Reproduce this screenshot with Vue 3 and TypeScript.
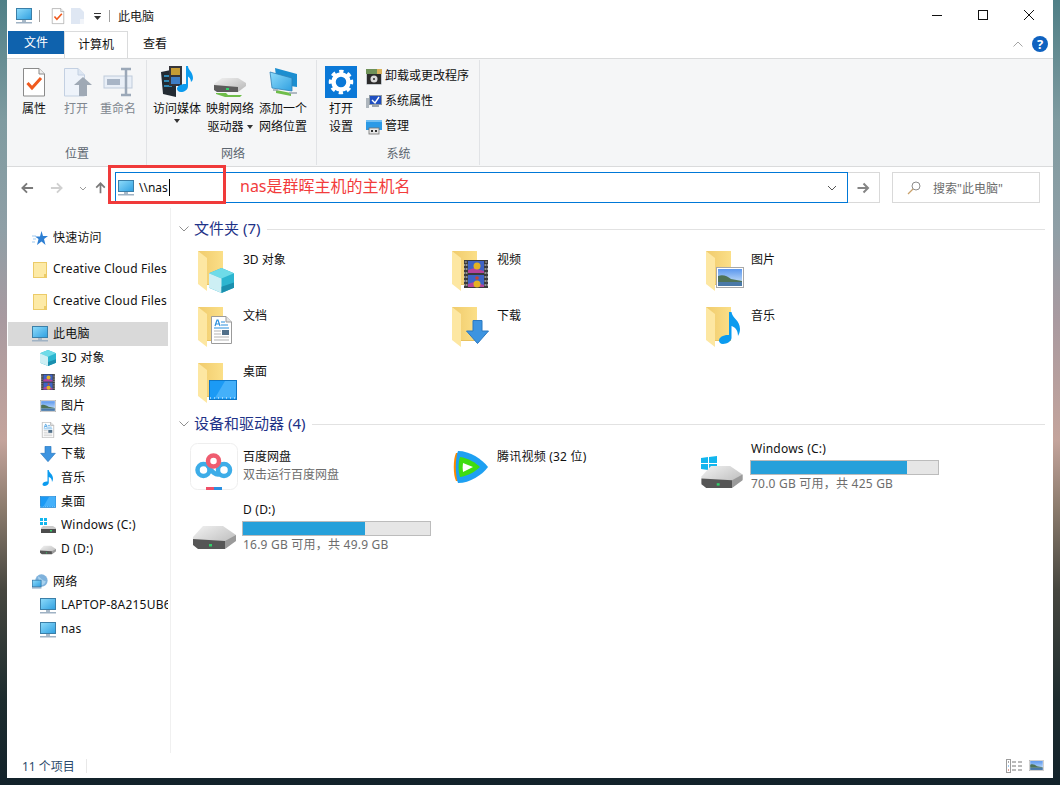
<script setup lang="ts">
interface NavRow {
  label: string;
  icon: string;
  level: 0 | 1;
  selected?: boolean;
  gapAfter?: boolean;
}

interface Overlay {
  id: string;
  x: number;
  y: number;
  w: number;
  h: number;
}

interface FolderTile {
  label: string;
  overlay: Overlay;
}

const navRows: NavRow[] = [
  { label: '快速访问', icon: 'star', level: 0, gapAfter: true },
  { label: 'Creative Cloud Files', icon: 'nav-folder', level: 0, gapAfter: true },
  { label: 'Creative Cloud Files', icon: 'nav-folder', level: 0, gapAfter: true },
  { label: '此电脑', icon: 'pc', level: 0, selected: true },
  { label: '3D 对象', icon: 'cube', level: 1 },
  { label: '视频', icon: 'film', level: 1 },
  { label: '图片', icon: 'picture', level: 1 },
  { label: '文档', icon: 'doc', level: 1 },
  { label: '下载', icon: 'arrow', level: 1 },
  { label: '音乐', icon: 'note', level: 1 },
  { label: '桌面', icon: 'screen', level: 1 },
  { label: 'Windows (C:)', icon: 'win-drive', level: 1 },
  { label: 'D (D:)', icon: 'drive', level: 1, gapAfter: true },
  { label: '网络', icon: 'network', level: 0 },
  { label: 'LAPTOP-8A215UB6', icon: 'pc', level: 1 },
  { label: 'nas', icon: 'pc', level: 1 },
];

const folders: FolderTile[] = [
  { label: '3D 对象', overlay: { id: 'cube', x: 20, y: 22, w: 25, h: 25 } },
  { label: '视频', overlay: { id: 'film', x: 21, y: 14, w: 24, h: 28 } },
  { label: '图片', overlay: { id: 'picture', x: 19, y: 21, w: 28, h: 21 } },
  { label: '文档', overlay: { id: 'doc', x: 22, y: 14, w: 21, h: 28 } },
  { label: '下载', overlay: { id: 'arrow', x: 23, y: 18, w: 23, h: 24 } },
  { label: '音乐', overlay: { id: 'note', x: 22, y: 10, w: 22, h: 32 } },
  { label: '桌面', overlay: { id: 'screen', x: 20, y: 22, w: 28, h: 20 } },
];
</script>

<template>
  <div class="desktop">
    <svg class="sprites" aria-hidden="true">
      <defs>
        <linearGradient id="pc-grad" x1="0" y1="0" x2="1" y2="1">
          <stop offset="0" stop-color="#8fdcfb" />
          <stop offset="1" stop-color="#2f9fe0" />
        </linearGradient>
        <linearGradient id="folder-back" x1="0" y1="0" x2="1" y2="0">
          <stop offset="0" stop-color="#f0cb6c" />
          <stop offset="1" stop-color="#fbdf88" />
        </linearGradient>
        <linearGradient id="drive-top" x1="0" y1="0" x2="1" y2="1">
          <stop offset="0" stop-color="#f2f2f2" />
          <stop offset="1" stop-color="#b5b5b5" />
        </linearGradient>
        <linearGradient id="sky" x1="0" y1="0" x2="0" y2="1">
          <stop offset="0" stop-color="#5b97ee" />
          <stop offset="1" stop-color="#d8ecfa" />
        </linearGradient>
      </defs>
      <symbol id="pc" viewBox="0 0 16 16">
        <rect x="0.5" y="0.5" width="15" height="11" fill="url(#pc-grad)" stroke="#3b7fa8" />
        <rect x="6" y="12" width="4" height="2" fill="#a9b9c8" />
        <rect x="0" y="14" width="16" height="1.5" fill="#9fb2c4" />
      </symbol>
      <symbol id="folder" viewBox="0 0 25 40">
        <path d="M0 0H25V33H0Z" fill="url(#folder-back)" />
        <path d="M0 0L9 7V40L0 33Z" fill="#fde7a2" />
        <path d="M9 33H25V34H9Z" fill="#e8c25f" />
      </symbol>
      <symbol id="nav-folder" viewBox="0 0 14 16">
        <rect x="0.5" y="0.5" width="13" height="15" fill="#fdeaa6" stroke="#eccb68" />
        <rect x="11" y="12" width="2.5" height="3.5" fill="#eccb68" />
      </symbol>
      <symbol id="star" viewBox="0 0 16 16">
        <path d="M9.5 1L11 6H16L12 9L13.5 15L9.5 11.5L5 15L6.5 9L3 6.5H8Z" fill="#2d7fd3" />
        <path d="M0 6H4M1 9H4M0 12H3" stroke="#9fc9ee" />
      </symbol>
      <symbol id="cube" viewBox="0 0 24 24">
        <path d="M12 0L24 5V19L12 24L0 19V5Z" fill="#2cb5d0" />
        <path d="M12 0L24 5L12 10L0 5Z" fill="#6edbe8" />
        <path d="M0 5L12 10V24L0 19Z" fill="#cdeff4" />
        <path d="M12 18L24 14V19L12 24Z" fill="#1b8fae" />
      </symbol>
      <symbol id="film" viewBox="0 0 24 28">
        <rect width="24" height="28" fill="#3b3b3b" />
        <rect x="0.8" y="2" width="2" height="24" fill="none" stroke="#bdbdbd" stroke-dasharray="2 2" />
        <rect x="21.2" y="2" width="2" height="24" fill="none" stroke="#bdbdbd" stroke-dasharray="2 2" />
        <rect x="4" y="1" width="16" height="12" fill="#3e63c6" />
        <rect x="4" y="15" width="16" height="12" fill="#3e63c6" />
        <path d="M4 10L10 8L20 11V13H4Z" fill="#b5439b" />
        <path d="M4 24L10 22L20 25V27H4Z" fill="#b5439b" />
        <circle cx="13" cy="6" r="3.5" fill="#e3b224" />
        <circle cx="13" cy="24" r="3.5" fill="#e3b224" />
        <circle cx="13" cy="18" r="1.8" fill="#c8452f" />
      </symbol>
      <symbol id="picture" viewBox="0 0 28 21">
        <rect x="0.5" y="0.5" width="27" height="20" fill="#fff" stroke="#a8a8a8" />
        <rect x="2" y="2" width="24" height="17" fill="url(#sky)" />
        <path d="M2 9C7 7 11 9 15 12L26 14V15H2Z" fill="#4f7356" />
        <rect x="2" y="15" width="24" height="4" fill="#4a79a8" />
      </symbol>
      <symbol id="doc" viewBox="0 0 21 28">
        <path d="M0.5 0.5H15L20.5 6V27.5H0.5Z" fill="#fff" stroke="#9b9b9b" />
        <path d="M15 0.5V6H20.5" fill="#e4e4e4" stroke="#9b9b9b" />
        <path d="M4 10L6 4H7L9 10M5 8H8" fill="none" stroke="#2b8fdc" stroke-width="1.2" />
        <path d="M10 6H14M10 9H17M3 12H18" stroke="#2b8fdc" />
        <path d="M3 15H10M3 18H10M3 21H18M3 24H18" stroke="#b3b3b3" />
        <rect x="11" y="14" width="7" height="5" fill="#51708a" />
      </symbol>
      <symbol id="arrow" viewBox="0 0 23 24">
        <path d="M7 0.5H16V11H22.5L11.5 23.5L0.5 11H7Z" fill="#3d94e0" stroke="#2b78c0" />
      </symbol>
      <symbol id="note" viewBox="0 0 22 32">
        <path d="M10 0H12.5C13 6 21 8 21 17C21 20 20 22 19 24C19 18 16 15 12.5 14V26C12.5 29 8 32 4 32C1 32 0 30 0 28.5C0 25 5 22.5 10 23Z" fill="#0b9bef" />
      </symbol>
      <symbol id="screen" viewBox="0 0 28 20">
        <rect x="0.5" y="0.5" width="27" height="19" fill="#1b9af5" stroke="#0f77c6" />
        <path d="M16 1H27V18H6Z" fill="#44b0fa" />
        <path d="M1 18H27" stroke="#fff" stroke-dasharray="1 3" />
      </symbol>
      <symbol id="drive" viewBox="0 0 43 23">
        <path d="M10 0H30L43 9V14L33 22H4L0 17V11Z" fill="url(#drive-top)" />
        <path d="M0 13L32 15V23H5L0 19Z" fill="#565656" />
        <path d="M32 15L43 9V15L32 23Z" fill="#9a9a9a" />
        <rect x="16" y="18" width="3" height="2.5" fill="#33d06b" />
      </symbol>
      <symbol id="windows" viewBox="0 0 16 16">
        <path d="M0 2L7 1V7H0ZM8 1L16 0V7H8ZM0 8H7V14L0 13ZM8 8H16V15L8 14Z" fill="#12b6ee" />
      </symbol>
      <symbol id="win-drive" viewBox="0 0 16 16">
        <path d="M0 0H3V3H0ZM4 0H7V3H4ZM0 4H3V7H0ZM4 4H7V7H4Z" fill="#12b6ee" />
        <path d="M3 8H13L16 10V15H1V10Z" fill="#c9c9c9" />
        <path d="M1 11H16V15H1Z" fill="#4c4c4c" />
        <rect x="10" y="12" width="2" height="1.5" fill="#33d06b" />
      </symbol>
      <symbol id="network" viewBox="0 0 22 22">
        <circle cx="13" cy="9" r="8.5" fill="#7fb2dc" />
        <path d="M8 3C12 5 14 9 19 10C18 15 13 16 11 15Z" fill="#a8d2ee" />
        <rect x="0.5" y="8.5" width="12" height="9" fill="url(#pc-grad)" stroke="#2f76a8" />
        <rect x="0" y="18" width="13" height="2" fill="#8aa8c2" />
      </symbol>
      <symbol id="baidu" viewBox="0 0 48 48">
        <rect x="0.5" y="0.5" width="47" height="46" rx="7" fill="#fff" stroke="#eeeeee" />
        <circle cx="13.5" cy="27" r="6" fill="none" stroke="#3dade8" stroke-width="4.5" />
        <circle cx="34" cy="27" r="6" fill="none" stroke="#3dade8" stroke-width="4.5" />
        <path d="M18 23C21 28 26 33 30 31" fill="none" stroke="#3dade8" stroke-width="4.5" />
        <circle cx="23.5" cy="18" r="5.5" fill="none" stroke="#ef5d70" stroke-width="4.5" />
        <rect x="16" y="44" width="8" height="3" fill="#ef4f68" />
        <rect x="24" y="44" width="8" height="3" fill="#2a8fe0" />
      </symbol>
      <symbol id="tencent" viewBox="0 0 38 32">
        <path d="M6 2C3 8 3 24 6 30H9V2Z" fill="#ff8a00" />
        <path d="M8 0C20 0 32 8 38 16C32 24 20 32 8 32C5 24 5 8 8 0Z" fill="#1ea0f2" />
        <path d="M10 6C18 7 26 12 30 16C26 20 18 25 10 26C8 20 8 12 10 6Z" fill="#3fdc10" />
        <path d="M13 12L23 16L13 21C12.5 18 12.5 15 13 12Z" fill="#fff" />
      </symbol>
      <symbol id="check-doc" viewBox="0 0 32 32">
        <path d="M5.5 2.5H21L26.5 8V30H5.5Z" fill="#fff" stroke="#8a8a8a" />
        <path d="M21 2.5V8H26.5" fill="#eee" stroke="#8a8a8a" />
        <path d="M9.5 17L14 22L23 12" fill="none" stroke="#f05a1e" stroke-width="3" />
      </symbol>
      <symbol id="open-doc" viewBox="0 0 32 32">
        <path d="M4.5 2.5H18L24.5 9V30H4.5Z" fill="#eef3fa" stroke="#c3d0e2" />
        <path d="M18 2.5V9H24.5" fill="#dde6f2" stroke="#c3d0e2" />
        <path d="M14 19L23 11L32 19H27V30H19V19Z" fill="#9fa9b5" />
      </symbol>
      <symbol id="rename" viewBox="0 0 32 32">
        <rect x="2" y="10" width="28" height="12" fill="#e9eff7" stroke="#bfcbdb" />
        <rect x="5" y="13" width="13" height="6" fill="#a8b5c6" />
        <path d="M19 3H29M24 3V29M19 29H29" fill="none" stroke="#9ba8b8" stroke-width="2.5" />
      </symbol>
      <symbol id="media" viewBox="0 0 32 32">
        <path d="M0 6L15 3V31L2 28Z" fill="#232b33" />
        <path d="M3 10H11M3 15H11M3 20H11" stroke="#35a6e0" stroke-width="1.5" />
        <rect x="8" y="0" width="13" height="20" fill="#35343a" />
        <rect x="10" y="2" width="9" height="7" fill="#c69c34" />
        <rect x="10" y="11" width="9" height="7" fill="#3e7ec6" />
        <path d="M25 0H27C27 4 32 6 32 12C32 14 31 15 30 16C30 13 28 11 27 10.5V20C27 24 23 26 20 26C17 26 16 24 16 22.5C16 20 21 17.5 25 18Z" fill="#0b9bef" />
      </symbol>
      <symbol id="map-drive" viewBox="0 0 32 32">
        <path d="M8 12H24L32 17V20L24 26H3L0 22V18Z" fill="url(#drive-top)" />
        <path d="M0 19L24 21V26H3L0 24Z" fill="#5c5c5c" />
        <path d="M2 27H12L14 29H28L26 31H11L2 28Z" fill="#6fbd4a" />
        <rect x="12" y="22" width="3" height="2" fill="#33d06b" />
      </symbol>
      <symbol id="add-net" viewBox="0 0 32 32">
        <path d="M8 2L30 8V21L10 18Z" fill="#1c8ed0" />
        <path d="M3 6L25 12V25L5 22Z" fill="url(#pc-grad)" stroke="#2f82b8" stroke-width="0.8" />
        <path d="M9 24L24 27V30L9 27Z" fill="#6fbd4a" />
        <path d="M6 24H11M22 27H30" stroke="#9aa7b2" stroke-width="1.5" />
      </symbol>
      <symbol id="gear" viewBox="0 0 32 32">
        <rect width="32" height="32" fill="#0a78d7" />
        <circle cx="16" cy="16" r="10" fill="none" stroke="#fff" stroke-width="4.5" stroke-dasharray="3.93 3.93" transform="rotate(-11.2 16 16)" />
        <circle cx="16" cy="16" r="7.5" fill="none" stroke="#fff" stroke-width="4.5" />
      </symbol>
      <symbol id="uninstall" viewBox="0 0 16 16">
        <rect x="0.5" y="0.5" width="15" height="15" fill="#8f9aa3" />
        <rect x="0" y="0" width="16" height="5" fill="#6e9158" />
        <rect x="11" y="0" width="5" height="5" fill="#d9b25a" />
        <rect x="1" y="5" width="14" height="10" fill="#2b2b2b" />
        <circle cx="8" cy="10" r="3.5" fill="#d8d8d8" />
        <circle cx="8" cy="10" r="1" fill="#2b2b2b" />
      </symbol>
      <symbol id="system" viewBox="0 0 16 16">
        <rect x="0" y="4" width="3" height="10" fill="#aeb6bd" />
        <rect x="3.5" y="1.5" width="12" height="9" fill="#1e4ec0" stroke="#8d99a5" />
        <path d="M6 6L9 9L13 3" fill="none" stroke="#fff" stroke-width="1.4" />
        <rect x="6" y="11" width="7" height="2" fill="#9aa3ab" />
      </symbol>
      <symbol id="manage" viewBox="0 0 16 16">
        <rect x="0" y="1" width="16" height="10" fill="#2c9ae6" />
        <path d="M0 1H16V3H0Z" fill="#72bff2" />
        <rect x="3" y="9" width="10" height="6" fill="#e6e6e6" stroke="#707070" stroke-width="0.8" />
        <rect x="5" y="11" width="2" height="2" fill="#333" />
        <rect x="9" y="11" width="2" height="2" fill="#333" />
      </symbol>
      <symbol id="details-view" viewBox="0 0 16 14">
        <rect x="0.5" y="0.5" width="4" height="13" fill="#fff" stroke="#9c9c9c" />
        <path d="M2 2.5H3V3.5H2Z" fill="#555" />
        <path d="M2 6.5H3V7.5H2Z" fill="#3a90e0" />
        <path d="M2 10.5H3V11.5H2Z" fill="#c8452f" />
        <path d="M6 3H10M12 3H16M6 7H10M12 7H16M6 11H10M12 11H16" stroke="#777" />
      </symbol>
    </svg>

    <div class="window">
      <header class="titlebar">
        <svg class="qa-pc"><use href="#pc" /></svg>
        <span class="qa-sep" />
        <svg class="qa-doc"><use href="#check-doc" /></svg>
        <svg class="qa-new" viewBox="0 0 13 16">
          <path d="M0 0H9L13 4V16H0Z" fill="#dfe7f3" />
          <path d="M9 11H13V16H9Z" fill="#f1f4f9" />
        </svg>
        <svg class="qa-drop" viewBox="0 0 8 7">
          <path d="M0 0H7V1H0ZM0 3H7L3.5 7Z" fill="#333" />
        </svg>
        <span class="qa-sep" />
        <span class="title">此电脑</span>
        <div class="controls">
          <svg viewBox="0 0 46 31"><path d="M18 15.5H28" stroke="#111" /></svg>
          <svg viewBox="0 0 46 31"><rect x="18.5" y="10.5" width="9" height="9" fill="none" stroke="#111" /></svg>
          <svg viewBox="0 0 46 31"><path d="M18 10L28 20M28 10L18 20" stroke="#111" /></svg>
        </div>
      </header>

      <nav class="tabs">
        <span class="tab tab-file">文件</span>
        <span class="tab tab-active">计算机</span>
        <span class="tab tab-plain">查看</span>
        <svg class="collapse" viewBox="0 0 10 6"><path d="M0.5 5.5L5 1L9.5 5.5" fill="none" stroke="#a5a5a5" /></svg>
        <span class="help">?</span>
      </nav>

      <section class="ribbon">
        <div class="group group-location">
          <div class="group-items">
            <div class="big big-52"><svg class="big-icon"><use href="#check-doc" /></svg><span>属性</span></div>
            <div class="big big-32 muted"><svg class="big-icon"><use href="#open-doc" /></svg><span>打开</span></div>
            <div class="big big-52 muted"><svg class="big-icon"><use href="#rename" /></svg><span>重命名</span></div>
          </div>
          <div class="group-name">位置</div>
        </div>
        <div class="group group-network">
          <div class="group-items">
            <div class="big big-54">
              <svg class="big-icon"><use href="#media" /></svg>
              <span>访问媒体</span>
              <i class="caret-down" />
            </div>
            <div class="big big-52">
              <svg class="big-icon"><use href="#map-drive" /></svg>
              <span>映射网络</span>
              <span>驱动器 <i class="caret-inline" /></span>
            </div>
            <div class="big big-54">
              <svg class="big-icon"><use href="#add-net" /></svg>
              <span>添加一个</span>
              <span>网络位置</span>
            </div>
          </div>
          <div class="group-name">网络</div>
        </div>
        <div class="group group-system">
          <div class="group-items">
            <div class="big big-46">
              <svg class="big-icon"><use href="#gear" /></svg>
              <span>打开</span>
              <span>设置</span>
            </div>
            <div class="small-list">
              <div class="small"><svg><use href="#uninstall" /></svg><span>卸载或更改程序</span></div>
              <div class="small"><svg><use href="#system" /></svg><span>系统属性</span></div>
              <div class="small"><svg><use href="#manage" /></svg><span>管理</span></div>
            </div>
          </div>
          <div class="group-name">系统</div>
        </div>
      </section>

      <section class="addressbar">
        <div class="nav-buttons">
          <svg viewBox="0 0 14 12"><path d="M13 6H2M6.5 1L1.5 6L6.5 11" fill="none" stroke="#7a7a7a" stroke-width="2" /></svg>
          <svg viewBox="0 0 14 12"><path d="M1 6H12M7.5 1L12.5 6L7.5 11" fill="none" stroke="#d0d0d0" stroke-width="2" /></svg>
          <svg class="nav-chevron" viewBox="0 0 8 5"><path d="M1 1L4 4L7 1" fill="none" stroke="#9a9a9a" /></svg>
          <svg viewBox="0 0 12 14"><path d="M6 13V2M1 6.5L6 1.5L11 6.5" fill="none" stroke="#7a7a7a" stroke-width="2" /></svg>
        </div>
        <div class="address">
          <svg class="address-pc"><use href="#pc" /></svg>
          <span class="address-text">\\nas</span>
          <span class="text-caret" />
          <svg class="address-chevron" viewBox="0 0 10 6"><path d="M1 1L5 5L9 1" fill="none" stroke="#555" /></svg>
        </div>
        <div class="go">
          <svg viewBox="0 0 13 12"><path d="M0.5 6H11M6.5 1.5L11 6L6.5 10.5" fill="none" stroke="#858585" stroke-width="2" /></svg>
        </div>
        <div class="search">
          <svg viewBox="0 0 14 14"><circle cx="9" cy="5" r="4" fill="none" stroke="#8c8c8c" /><path d="M6 8L1 13" stroke="#c9a06a" stroke-width="1.2" /></svg>
          <span>搜索"此电脑"</span>
        </div>
        <span class="mark-box" />
        <span class="mark-text">nas是群晖主机的主机名</span>
      </section>

      <div class="body">
        <aside class="sidebar">
          <div
            v-for="(row, i) in navRows"
            :key="i"
            class="nav-row"
            :class="{ selected: row.selected, child: row.level === 1, spaced: row.gapAfter }"
          >
            <svg class="nav-icon"><use :href="'#' + row.icon" /></svg>
            <span class="nav-label">{{ row.label }}</span>
          </div>
        </aside>

        <main class="content">
          <h2 class="section-head">
            <svg viewBox="0 0 10 6"><path d="M0.5 0.5L5 5L9.5 0.5" fill="none" stroke="#8f8f8f" /></svg>
            <span>文件夹 (7)</span>
            <i />
          </h2>
          <div class="grid folders">
            <div v-for="tile in folders" :key="tile.label" class="tile">
              <svg class="tile-icon" viewBox="0 0 54 50">
                <use href="#folder" x="9" y="5" width="25" height="40" />
                <use :href="'#' + tile.overlay.id" :x="tile.overlay.x" :y="tile.overlay.y" :width="tile.overlay.w" :height="tile.overlay.h" />
              </svg>
              <div class="tile-text">{{ tile.label }}</div>
            </div>
          </div>

          <h2 class="section-head">
            <svg viewBox="0 0 10 6"><path d="M0.5 0.5L5 5L9.5 0.5" fill="none" stroke="#8f8f8f" /></svg>
            <span>设备和驱动器 (4)</span>
            <i />
          </h2>
          <div class="grid devices">
            <div class="tile">
              <svg class="tile-icon" viewBox="0 0 54 50"><use href="#baidu" x="1" y="1" width="48" height="48" /></svg>
              <div class="tile-text app">
                <div>百度网盘</div>
                <div class="sub">双击运行百度网盘</div>
              </div>
            </div>
            <div class="tile">
              <svg class="tile-icon" viewBox="0 0 54 50"><use href="#tencent" x="7" y="9" width="38" height="32" /></svg>
              <div class="tile-text app latin">腾讯视频 (32 位)</div>
            </div>
            <div class="tile">
              <svg class="tile-icon" viewBox="0 0 54 50">
                <use href="#windows" x="4" y="14" width="16" height="16" />
                <use href="#drive" x="4" y="24" width="42" height="22" />
              </svg>
              <div class="drive-info">
                <div class="drive-name latin">Windows (C:)</div>
                <div class="bar"><div class="fill" :style="{ width: '83.5%' }" /></div>
                <div class="sub latin">70.0 GB 可用，共 425 GB</div>
              </div>
            </div>
            <div class="tile">
              <svg class="tile-icon" viewBox="0 0 54 50"><use href="#drive" x="4" y="23" width="43" height="23" /></svg>
              <div class="drive-info">
                <div class="drive-name latin">D (D:)</div>
                <div class="bar"><div class="fill" :style="{ width: '65.5%' }" /></div>
                <div class="sub latin">16.9 GB 可用，共 49.9 GB</div>
              </div>
            </div>
          </div>
        </main>
      </div>

      <footer class="statusbar">
        <span class="count">11 个项目</span>
        <span class="status-sep" />
        <svg class="view-details"><use href="#details-view" /></svg>
        <svg class="view-large"><use href="#picture" /></svg>
      </footer>
    </div>
  </div>
</template>

<style>
html,
body {
  margin: 0;
  background: #14252a;
}
</style>

<style scoped>
.desktop {
  position: relative;
  box-sizing: border-box;
  width: 1060px;
  height: 785px;
  padding: 0 7px 7px;
  overflow: hidden;
  background: linear-gradient(180deg, #4f7f86 0, #7f9ba0 120px, #8f9fa6 230px, #a99aa0 320px, #c4a49c 440px, #8a7a6c 510px, #46463f 590px, #1d2c2e 700px, #12222a 785px);
  font-family: "Noto Sans", "Noto Sans CJK SC", sans-serif;
  font-size: 12px;
  color: #111;
}

.sprites {
  position: absolute;
  width: 0;
  height: 0;
}

.window {
  display: flex;
  flex-direction: column;
  height: 778px;
  background: #fff;
}

.titlebar {
  display: flex;
  align-items: center;
  flex: 0 0 31px;
  padding-left: 9px;
}

.qa-pc {
  width: 16px;
  height: 16px;
}

.qa-sep {
  width: 1px;
  height: 12px;
  margin: 0 8px 0 7px;
  background: #a0a0a0;
}

.qa-doc {
  width: 16px;
  height: 16px;
  margin-left: 2px;
  transform: scale(1.1);
}

.qa-new {
  width: 13px;
  height: 16px;
  margin-left: 5px;
}

.qa-drop {
  width: 8px;
  height: 7px;
  margin: 2px 0 0 10px;
}

.title {
  font-size: 12px;
  color: #222;
}

.controls {
  display: flex;
  margin-left: auto;
  margin-right: 1px;
}

.controls svg {
  display: block;
  width: 46px;
  height: 31px;
}

.tabs {
  position: relative;
  display: flex;
  flex: 0 0 27px;
  box-sizing: border-box;
  align-items: flex-start;
  padding-left: 1px;
  border-bottom: 1px solid #dadbdc;
}

.tab {
  box-sizing: border-box;
  text-align: center;
  line-height: 23px;
}

.tab-file {
  width: 56px;
  height: 23px;
  background: #0f62ad;
  color: #fff;
}

.tab-active {
  position: relative;
  width: 64px;
  height: 27px;
  border: 1px solid #dadbdc;
  border-bottom: 0;
  background: #fff;
  line-height: 26px;
}

.tab-plain {
  width: 54px;
  line-height: 26px;
}

.collapse {
  position: absolute;
  top: 10px;
  right: 30px;
  width: 10px;
  height: 6px;
}

.help {
  position: absolute;
  top: 5px;
  right: 5px;
  width: 16px;
  height: 16px;
  border-radius: 50%;
  background: #0f62c0;
  color: #fff;
  font-size: 13px;
  font-weight: 700;
  line-height: 16px;
  text-align: center;
}

.ribbon {
  display: flex;
  flex: 0 0 108px;
  box-sizing: border-box;
  padding-left: 1px;
  border-bottom: 1px solid #dadbdc;
  background: #f5f6f7;
}

.group {
  display: flex;
  flex-direction: column;
  box-sizing: border-box;
  height: 105px;
  margin-top: 1px;
  border-right: 1px solid #e1e3e6;
}

.group-location {
  width: 139px;
}

.group-network {
  width: 170px;
  padding-left: 3px;
}

.group-system {
  width: 163px;
  padding-left: 1px;
}

.group-items {
  display: flex;
  flex: 1;
}

.group-name {
  height: 22px;
  color: #5c6670;
  line-height: 22px;
  text-align: center;
}

.big {
  display: flex;
  flex-direction: column;
  align-items: center;
  padding-top: 6px;
  line-height: 18px;
  white-space: nowrap;
}

.big-icon {
  flex: none;
  width: 32px;
  height: 32px;
  margin-bottom: 2px;
}

.big-32 {
  width: 32px;
}

.big-46 {
  width: 46px;
}

.big-52 {
  width: 52px;
}

.big-54 {
  width: 54px;
}

.muted {
  color: #80878f;
}

.caret-down {
  width: 0;
  height: 0;
  margin-top: 1px;
  border: 3px solid transparent;
  border-top: 4px solid #333;
  border-bottom: 0;
}

.caret-inline {
  display: inline-block;
  width: 0;
  height: 0;
  margin-bottom: 2px;
  border: 3px solid transparent;
  border-top: 4px solid #333;
  border-bottom: 0;
}

.small-list {
  display: flex;
  flex-direction: column;
  padding: 4px 0 0 2px;
}

.small {
  display: flex;
  align-items: center;
  gap: 3px;
  height: 25px;
  white-space: nowrap;
}

.small span {
  padding-bottom: 3px;
}

.small svg {
  width: 16px;
  height: 16px;
}

.addressbar {
  position: relative;
  display: flex;
  flex: 0 0 41px;
  box-sizing: border-box;
  align-items: flex-start;
  padding: 5px 0 0 14px;
}

.nav-buttons {
  display: flex;
  align-items: center;
  width: 94px;
  height: 32px;
}

.nav-buttons svg {
  width: 13px;
  height: 12px;
  margin-right: 16px;
}

.nav-buttons .nav-chevron {
  width: 8px;
  height: 5px;
  margin: 0 7px 0 0;
}

.nav-buttons svg:last-child {
  margin: 0;
}

.address {
  display: flex;
  align-items: center;
  box-sizing: border-box;
  width: 733px;
  height: 31px;
  padding-left: 2px;
  border: 1px solid #0078d7;
}

.address-pc {
  flex: none;
  width: 16px;
  height: 16px;
}

.address-text {
  margin-left: 5px;
}

.text-caret {
  width: 1px;
  height: 17px;
  margin-left: 1px;
  background: #000;
}

.address-chevron {
  width: 10px;
  height: 6px;
  margin-left: auto;
  margin-right: 10px;
}

.go {
  display: flex;
  align-items: center;
  justify-content: center;
  box-sizing: border-box;
  width: 32px;
  height: 31px;
  border: 1px solid #d9d9d9;
  border-left: 0;
}

.go svg {
  width: 13px;
  height: 12px;
}

.search {
  display: flex;
  align-items: center;
  box-sizing: border-box;
  width: 148px;
  height: 31px;
  margin-left: 12px;
  padding-left: 14px;
  border: 1px solid #d9d9d9;
  color: #6d6d6d;
}

.search svg {
  width: 14px;
  height: 14px;
  margin-right: 12px;
}

.mark-box {
  position: absolute;
  top: -2px;
  left: 101px;
  box-sizing: border-box;
  width: 118px;
  height: 39px;
  border: 3px solid #f03a3a;
}

.mark-text {
  position: absolute;
  top: 9px;
  left: 233px;
  color: #f23c3c;
  font-size: 16px;
  line-height: 21px;
}

.body {
  display: flex;
  flex: 1;
  min-height: 0;
}

.sidebar {
  box-sizing: border-box;
  flex: 0 0 164px;
  min-width: 0;
  padding: 18px 2px 0 1px;
  border-right: 1px solid #f0f0f0;
}

.nav-row {
  display: flex;
  align-items: center;
  height: 24px;
  padding-left: 24px;
}

.nav-row.child {
  padding-left: 32px;
}

.nav-row.spaced {
  margin-bottom: 8px;
}

.nav-row.selected {
  background: #d9d9d9;
}

.nav-icon {
  flex: none;
  width: 16px;
  height: 16px;
  margin-right: 5px;
}

.nav-label {
  overflow: hidden;
  padding-bottom: 3px;
  letter-spacing: 0.2px;
  white-space: nowrap;
}

.content {
  flex: 1;
  min-width: 0;
  padding: 11px 8px 0 18px;
}

.section-head {
  display: flex;
  align-items: center;
  height: 20px;
  margin: 0 0 0 -10px;
  color: #1e3287;
  font-size: 15px;
  font-weight: 400;
}

.section-head span {
  padding-bottom: 3px;
}

.section-head svg {
  width: 10px;
  height: 6px;
  margin-right: 5px;
}

.section-head i {
  flex: 1;
  height: 1px;
  margin-left: 7px;
  background: #e2e2e2;
}

.grid {
  display: grid;
  grid-template-columns: repeat(3, 254px);
}

.folders {
  grid-auto-rows: 56px;
  margin-top: 7px;
}

.devices {
  grid-auto-rows: 61px;
  margin-top: 8px;
}

.tile {
  display: flex;
}

.tile-icon {
  flex: none;
  width: 54px;
  height: 50px;
}

.tile-text {
  padding-top: 5px;
  line-height: 18px;
}

.tile-text.app {
  padding-top: 6px;
}

.latin {
  letter-spacing: 0.22px;
}

.sub {
  color: #6d6d6d;
  line-height: 18px;
}

.drive-name {
  line-height: 14px;
}

.bar {
  box-sizing: border-box;
  width: 189px;
  height: 15px;
  margin: 4px 0 0 -1px;
  border: 1px solid #bcbcbc;
  background: #e6e6e6;
}

.fill {
  height: 100%;
  background: #26a0da;
}

.statusbar {
  display: flex;
  align-items: center;
  flex: 0 0 25px;
  padding-left: 15px;
}

.count {
  color: #2b4a6b;
}

.status-sep {
  width: 1px;
  height: 14px;
  margin-left: 11px;
  background: #e8e8e8;
}

.view-details {
  width: 16px;
  height: 14px;
  margin-left: auto;
}

.view-large {
  width: 15px;
  height: 11px;
  margin: 0 9px 0 7px;
}
</style>
